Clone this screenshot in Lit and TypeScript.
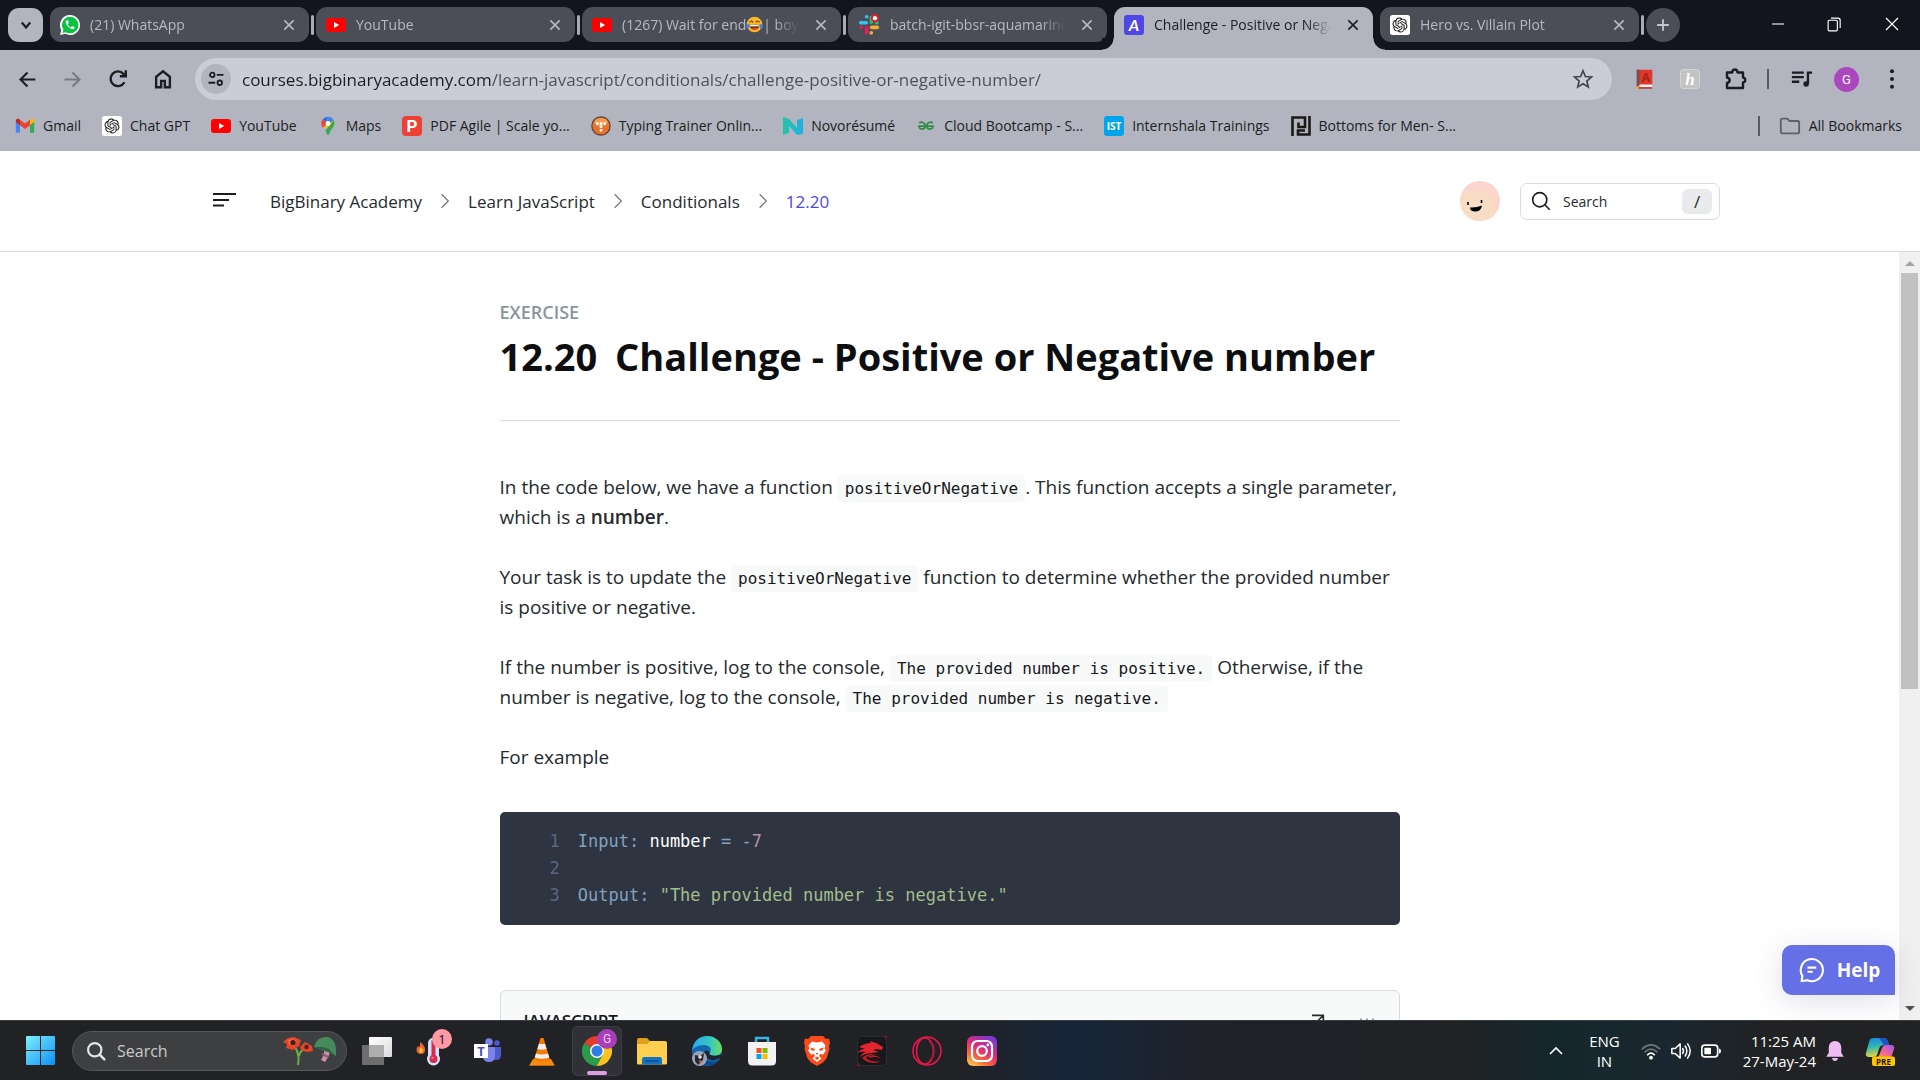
import { LitElement, html, svg, css, nothing, TemplateResult } from "lit";
import { customElement } from "lit/decorators.js";
import { classMap } from "lit/directives/class-map.js";

/* ---------- icons ---------- */

const icon = (size: number, body: TemplateResult, box = "0 0 24 24") =>
  html`<svg width=${size} height=${size} viewBox=${box} fill="none" aria-hidden="true">${body}</svg>`;

const gptPath =
  "M22.2819 9.8211a5.9847 5.9847 0 0 0-.5157-4.9108 6.0462 6.0462 0 0 0-6.5098-2.9A6.0651 6.0651 0 0 0 4.9807 4.1818a5.9847 5.9847 0 0 0-3.9977 2.9 6.0462 6.0462 0 0 0 .7427 7.0966 5.98 5.98 0 0 0 .511 4.9107 6.051 6.051 0 0 0 6.5146 2.9001A5.9847 5.9847 0 0 0 13.2599 24a6.0557 6.0557 0 0 0 5.7718-4.2058 5.9894 5.9894 0 0 0 3.9977-2.9001 6.0557 6.0557 0 0 0-.7475-7.0729zm-9.022 12.6081a4.4755 4.4755 0 0 1-2.8764-1.0408l.1419-.0804 4.7783-2.7582a.7948.7948 0 0 0 .3927-.6813v-6.7369l2.02 1.1686a.071.071 0 0 1 .038.052v5.5826a4.504 4.504 0 0 1-4.4945 4.4944zm-9.6607-4.1254a4.4708 4.4708 0 0 1-.5346-3.0137l.142.0852 4.783 2.7582a.7712.7712 0 0 0 .7806 0l5.8428-3.3685v2.3324a.0804.0804 0 0 1-.0332.0615L9.74 19.9502a4.4992 4.4992 0 0 1-6.1408-1.6464zM2.3408 7.8956a4.485 4.485 0 0 1 2.3655-1.9728V11.6a.7664.7664 0 0 0 .3879.6765l5.8144 3.3543-2.0201 1.1685a.0757.0757 0 0 1-.071 0l-4.8303-2.7865A4.504 4.504 0 0 1 2.3408 7.872zm16.5963 3.8558L13.1038 8.364 15.1192 7.2a.0757.0757 0 0 1 .071 0l4.8303 2.7913a4.4944 4.4944 0 0 1-.6765 8.1042v-5.6772a.79.79 0 0 0-.407-.667zm2.0107-3.0231l-.142-.0852-4.7735-2.7818a.7759.7759 0 0 0-.7854 0L9.409 9.2297V6.8974a.0662.0662 0 0 1 .0284-.0615l4.8303-2.7866a4.4992 4.4992 0 0 1 6.6802 4.66zM8.3065 12.863l-2.02-1.1638a.0804.0804 0 0 1-.038-.0567V6.0742a4.4992 4.4992 0 0 1 7.3757-3.4537l-.142.0805L8.704 5.459a.7948.7948 0 0 0-.3927.6813zm1.0976-2.3654l2.602-1.4998 2.6069 1.4998v2.9994l-2.5974 1.4997-2.6067-1.4997Z";

const phonePath =
  "M6.62 10.79c1.44 2.83 3.76 5.14 6.59 6.59l2.2-2.2c.27-.27.67-.36 1.02-.24 1.12.37 2.33.57 3.57.57.55 0 1 .45 1 1V20c0 .55-.45 1-1 1-9.39 0-17-7.61-17-17 0-.55.45-1 1-1h3.5c.55 0 1 .45 1 1 0 1.25.2 2.45.57 3.57.11.35.03.74-.25 1.02l-2.2 2.2z";

const youtube = icon(20, svg`
  <rect x="0" y="3" width="20" height="14" rx="3" fill="#f00"/>
  <path d="M8 7l5.2 3L8 13z" fill="#fff"/>`, "0 0 20 20");

const chatgpt = icon(20, svg`
  <rect width="32" height="32" rx="4" fill="#fff"/>
  <path transform="translate(4 4)" d=${gptPath} fill="#111"/>`, "0 0 32 32");

const whatsapp = icon(20, svg`
  <path d="M12 0a12 12 0 1 1-5.6 22.6L0 24l1.6-6A12 12 0 0 1 12 0z" fill="#fff"/>
  <path d="M12 2a10 10 0 1 1-5 18.600L3 21.500l1-4A10 10 0 0 1 12 2z" fill="#0dc143"/>
  <path transform="translate(5.200 5) scale(.57)" d=${phonePath} fill="#fff"/>`);

const slack = icon(22, svg`
  <g stroke-width="4" stroke-linecap="round">
    <path d="M3 9.500h6" stroke="#36c5f0"/><path d="M9.500 3v0" stroke="#36c5f0"/>
    <path d="M14.500 4v5" stroke="#2eb67d"/><path d="M20.500 9.500v0" stroke="#2eb67d"/>
    <path d="M15 14.500h6" stroke="#ecb22e"/><path d="M14.500 20.500v0" stroke="#ecb22e"/>
    <path d="M9.500 15v5.500" stroke="#e01e5a"/><path d="M3.500 14.500v0" stroke="#e01e5a"/>
  </g>
  <circle cx="18.500" cy="4.500" r="4.500" fill="#e0202c"/><circle cx="18.500" cy="4.500" r="2.300" fill="#fff"/>`);

const academy = icon(20, svg`
  <rect width="20" height="20" rx="3" fill="#4f46e5"/>
  <text x="10" y="16" text-anchor="middle" font-family="Lato, sans-serif" font-style="italic" font-weight="700" font-size="16" fill="#fff">A</text>`, "0 0 20 20");

const laughing = icon(17, svg`
  <circle cx="12" cy="12" r="11" fill="#fcb829"/>
  <path d="M5 12.500h14a7 7 0 0 1-14 0z" fill="#7a3510"/>
  <path d="M6 12.500h12v2H6z" fill="#fff"/>
  <path d="M8 18.500a6 6 0 0 1 8 0 7 7 0 0 1-8 0z" fill="#e8443c"/>
  <path d="M5 9q2.500-4 5 0M14 9q2.500-4 5 0" stroke="#6b3410" stroke-width="1.600"/>
  <path d="M4.500 11c-4 1-5 4-4 6s4 1 4-2zM19.500 11c4 1 5 4 4 6s-4 1-4-2z" fill="#3f7df0"/>`);

const gmail = icon(20, svg`
  <path d="M1 20V6l5 4v10H2.500Q1 20 1 20z" fill="#4285f4"/>
  <path d="M23 20V6l-5 4v10h3.500Q23 20 23 20z" fill="#34a853"/>
  <path d="M6 4.500l6 4.500 6-4.500V11l-6 4.500L6 11z" fill="#ea4335"/>
  <path d="M1 6c0-2.500 2.700-3.300 4.300-2.100L6 4.500V11L1 7.200z" fill="#c5221f"/>
  <path d="M23 6c0-2.500-2.700-3.300-4.300-2.100L18 4.500V11l5-3.800z" fill="#fbbc04"/>`);

const maps = icon(20, svg`
  <path d="M12 1a8 8 0 0 0-6.300 3.100L10 8z" fill="#1a73e8"/>
  <path d="M5.700 4.100C3 7.500 3.800 11 5.800 14L12 7.500z" fill="#ea4335"/>
  <path d="M12 1a8 8 0 0 1 6.900 4L12 12.500 9 6z" fill="#4285f4"/>
  <path d="M5.800 14L18.900 5c1.500 3 1.200 6-.9 9z" fill="#fbbc04"/>
  <path d="M18.900 5c2 4-.2 8-2.700 11-2 2.500-2.800 7-4.200 7s-1.500-3.500-3-5.500z" fill="#34a853"/>
  <circle cx="12" cy="9" r="2.900" fill="#fff"/>`);

const pdfAgile = icon(20, svg`
  <rect width="20" height="20" rx="4" fill="#ee4035"/>
  <text x="10" y="16" text-anchor="middle" font-family="Roboto, sans-serif" font-weight="700" font-size="17" fill="#fff">P</text>`, "0 0 20 20");

const typing = icon(20, svg`
  <circle cx="12" cy="12" r="11" fill="#e8722a" stroke="#5c4034" stroke-width="1.400"/>
  <ellipse cx="12" cy="7.500" rx="8" ry="5" fill="#f59a4e"/>
  <path d="M6 7.500h3v3H6zM10.500 7.500h3v3h-3zM15 7.500h3v3h-3zM10.500 11.500h3v3h-3zM10.500 15.500h3v3h-3z" fill="#fff"/>`);

const novo = icon(20, svg`
  <defs><linearGradient id="nv" x1="0" x2="1"><stop stop-color="#27c3a5"/><stop offset="1" stop-color="#1fb0e6"/></linearGradient></defs>
  <path d="M0 1l6 2 8 9V4l6-2v16l-6 1-8-9v7l-6 2z" fill="url(#nv)"/>`, "0 0 20 20");

const geeks = icon(20, svg`
  <g stroke="#2f8d46" stroke-width="2">
    <path d="M4 8.500C6 6.500 11 7.500 11 12s-6 5-7.500 1M20 8.500C18 6.500 13 7.500 13 12s6 5 7.500 1"/>
    <path d="M2.500 12.200h19"/>
  </g>`);

const internshala = icon(20, svg`
  <rect width="20" height="20" rx="3" fill="#00a5ec"/>
  <text x="10" y="14" text-anchor="middle" font-family="Open Sans, sans-serif" font-weight="700" font-size="10" fill="#fff">IST</text>`, "0 0 20 20");

const bottoms = icon(20, svg`
  <path d="M1.500 20V1.500H14v9.500H7.500V6.500" stroke="#1b1816" stroke-width="2.600"/>
  <path d="M18.500 0v18.500H7v-4h7" stroke="#1b1816" stroke-width="2.600"/>`, "0 0 20 20");

const stroke = (size: number, d: string, width = 2, cls = "") =>
  html`<svg class=${cls} width=${size} height=${size} viewBox="0 0 24 24" fill="none" stroke="currentColor" stroke-width=${width} aria-hidden="true"><path d=${d} /></svg>`;

const closeIcon = stroke(16, "M5 5l14 14M19 5L5 19", 2.4);

/* ---------- browser window ---------- */

interface Tab { icon: unknown; title: unknown; label: string; active?: boolean; divider?: boolean; }

@customElement("browser-chrome")
export class BrowserChrome extends LitElement {
  static styles = css`
    :host { display: block; background: #b2b5c0; color: #1c1d22; font-family: "Open Sans", sans-serif; font-size: 14px; }
    button { font: inherit; color: inherit; background: none; border: 0; padding: 0; display: grid; place-items: center; }
    a { color: inherit; text-decoration: none; }
    svg { display: block; flex: none; }
    .strip { height: 50px; background: #12141e; display: flex; align-items: stretch; padding-left: 8px; }
    .more { width: 35px; height: 34px; margin: 8px 7px 0 0; border-radius: 11px; background: #b2b5c0; flex: none; }
    .tab { flex: 0 1 266px; min-width: 0; display: flex; position: relative; }
    .body { width: 259px; height: 35px; margin-top: 7px; border-radius: 11px; background: #4c4e57; color: #b6b9c3;
      display: flex; align-items: center; padding: 0 12px 0 10px; box-sizing: border-box; }
    .title { flex: 1; min-width: 0; margin: 0 14px 0 10px; white-space: nowrap; overflow: hidden; display: flex; align-items: center;
      -webkit-mask-image: linear-gradient(90deg, #000 calc(100% - 24px), transparent); mask-image: linear-gradient(90deg, #000 calc(100% - 24px), transparent); }
    .divider::after { content: ""; position: absolute; right: 2px; top: 15px; width: 3px; height: 20px; border-radius: 2px; background: #a9acb7; }
    .active .body { height: 43px; padding-bottom: 8px; border-radius: 11px 11px 0 0; background: #b2b5c0; color: #1c1d22; }
    .active::before, .active::after { content: ""; position: absolute; bottom: 0; width: 12px; height: 12px; }
    .active::before { left: -12px; background: radial-gradient(circle at 0 0, #12141e 11px, #b2b5c0 12px); }
    .active::after { right: -5px; background: radial-gradient(circle at 100% 0, #12141e 11px, #b2b5c0 12px); }
    .plus { width: 34px; height: 34px; margin-top: 8px; border-radius: 50%; background: #4c4e57; color: #c3c6d0; flex: none; }
    .window { margin-left: auto; display: flex; color: #fff; }
    .window button { width: 57px; height: 48px; }

    .bar { height: 58px; display: flex; align-items: center; padding: 0 6px 0 5px; box-sizing: border-box; }
    .nav { width: 45px; height: 40px; flex: none; }
    .dim { color: #777a84; }
    .omni { flex: 1; min-width: 0; height: 42px; margin: 0 10px; border-radius: 21px; background: #cacdd6;
      display: flex; align-items: center; padding: 0 18px 0 6px; gap: 11px; }
    .info { width: 30px; height: 30px; border-radius: 50%; background: #b2b5c0; flex: none; }
    .url { flex: 1; min-width: 0; border: 0; padding: 0; outline: 0; font: inherit; font-size: 17px; height: 28px;
      background: linear-gradient(90deg, #1c1d22 250px, #4c4f58 250px); -webkit-background-clip: text; background-clip: text; color: transparent; }
    .ext { width: 45px; height: 40px; flex: none; }
    .rule { width: 2px; height: 20px; background: #595b64; flex: none; margin: 0 10px; }
    .me { width: 25px; height: 25px; border-radius: 50%; background: #ab47bc; color: #fff; font: 13px Roboto, sans-serif; display: grid; place-items: center; }
    .marks { height: 43px; display: flex; align-items: center; padding: 0 18px 8px 15px; box-sizing: border-box; gap: 21px; }
    .mark { display: flex; align-items: center; gap: 8px; white-space: nowrap; }
    .all { margin-left: auto; display: flex; align-items: center; gap: 9px; }
  `;

  private tabs: Tab[] = [
    { icon: whatsapp, title: "(21) WhatsApp", label: "(21) WhatsApp", divider: true },
    { icon: youtube, title: "YouTube", label: "YouTube", divider: true },
    { icon: youtube, title: html`(1267) Wait for end${laughing}| boys`, label: "Wait for end", divider: true },
    { icon: slack, title: "batch-igit-bbsr-aquamarine", label: "batch-igit-bbsr-aquamarine" },
    { icon: academy, title: "Challenge - Positive or Negative", label: "Challenge", active: true },
    { icon: chatgpt, title: "Hero vs. Villain Plot", label: "Hero vs. Villain Plot", divider: true },
  ];

  private marks: [unknown, string][] = [
    [gmail, "Gmail"], [chatgpt, "Chat GPT"], [youtube, "YouTube"], [maps, "Maps"],
    [pdfAgile, "PDF Agile | Scale yo..."], [typing, "Typing Trainer Onlin..."], [novo, "Novorésumé"],
    [geeks, "Cloud Bootcamp - S..."], [internshala, "Internshala Trainings"], [bottoms, "Bottoms for Men- S..."],
  ];

  render() {
    return html`
      <div class="strip">
        <button class="more" aria-label="Search tabs">${stroke(20, "M7 9l5 6 5-6", 2.6)}</button>
        ${this.tabs.map((t) => html`
          <div class=${classMap({ tab: true, active: !!t.active, divider: !!t.divider })}>
            <div class="body">
              ${t.icon}<span class="title">${t.title}</span>
              <button aria-label="Close ${t.label}">${closeIcon}</button>
            </div>
          </div>`)}
        <button class="plus" aria-label="New tab">${stroke(20, "M12 5v14M5 12h14", 2.2)}</button>
        <div class="window">
          <button aria-label="Minimize">${stroke(16, "M3 12h18", 1.6)}</button>
          <button aria-label="Restore">${stroke(17, "M3 7.500q0-1.500 1.500-1.500h10q1.500 0 1.500 1.500v12q0 1.500-1.500 1.500h-10Q3 21 3 19.500zM7 3h10q3 0 3 3v11", 1.6)}</button>
          <button aria-label="Close">${stroke(18, "M4 4l16 16M20 4L4 20", 1.6)}</button>
        </div>
      </div>

      <div class="bar">
        <button class="nav" aria-label="Back">${stroke(21, "M21 12H4M12 4l-8 8 8 8", 2.4)}</button>
        <button class="nav dim" aria-label="Forward">${stroke(21, "M3 12h17M12 4l8 8-8 8", 2.4)}</button>
        <button class="nav" aria-label="Reload">${stroke(22, "M19 15.500A8 8 0 1 1 18 6.500l1.500 2M20.500 2.500V9h-6.500", 2.6)}</button>
        <button class="nav" aria-label="Home">${stroke(22, "M4.500 21V9.500L12 3.500l7.500 6V21H14v-7h-4v7z", 2.6)}</button>
        <div class="omni">
          <button class="info" aria-label="View site information">
            ${icon(18, svg`<g stroke="#1c1d22" stroke-width="2.400"><circle cx="7" cy="6.500" r="3"/><path d="M13 6.500h9M2 17h9"/><circle cx="17" cy="17" r="3"/></g>`)}
          </button>
          <input class="url" aria-label="Address bar" value="courses.bigbinaryacademy.com/learn-javascript/conditionals/challenge-positive-or-negative-number/" />
          <button class="dim" aria-label="Bookmark this page">${icon(22, svg`<path d="M12 3l2.600 6.300 6.700.500-5.100 4.400 1.600 6.600L12 17.200l-5.800 3.600 1.600-6.600L2.700 9.800l6.700-.500z" stroke="#44464f" stroke-width="1.800"/>`)}</button>
        </div>
        <button class="ext" aria-label="Dictionary">
          ${icon(22, svg`<path d="M3 2h17v17H6l-3 3z" fill="#e2382c"/><path d="M3 2h3v17l-3 2z" fill="#6e5450"/><path d="M6 18h14v3H6z" fill="#f2efee"/><path d="M3 20h5l-2 3-3-1z" fill="#f2b62c"/><path d="M5 21h15v1.500H5z" fill="#b3241b"/>
            <text x="13" y="15" text-anchor="middle" font-family="Liberation Sans, sans-serif" font-weight="700" font-size="13" fill="#9c221a">A</text>`)}
        </button>
        <button class="ext" aria-label="Honey">
          ${icon(20, svg`<rect x=".5" y=".5" width="19" height="19" rx="3" fill="#c3c3c3" stroke="#d4d4d4"/><text x="10" y="16" text-anchor="middle" font-family="Liberation Serif, serif" font-style="italic" font-weight="700" font-size="17" fill="#fff">h</text>`, "0 0 20 20")}
        </button>
        <button class="ext" aria-label="Extensions">
          ${icon(24, svg`<path d="M4 5.500h5.200c.3-4 5-4 5.300 0H20v5c3 .4 3 4.600 0 5V21H4v-5c3.500-.5 3.500-5 0-5.500z" stroke="#1c1d22" stroke-width="2.400" stroke-linejoin="round"/>`)}
        </button>
        <span class="rule"></span>
        <button class="ext" aria-label="Media controls">
          ${icon(22, svg`<path d="M1 5h13M1 10h13M1 15h8M18.500 4v13M17.500 5H23" stroke="#1c1d22" stroke-width="2.600"/><circle cx="16.500" cy="17.500" r="3" fill="#1c1d22"/>`)}
        </button>
        <button class="ext" aria-label="Profile"><span class="me">G</span></button>
        <button class="ext" aria-label="Menu">
          ${icon(22, svg`<g fill="#1c1d22"><circle cx="12" cy="3.500" r="2.200"/><circle cx="12" cy="12" r="2.200"/><circle cx="12" cy="20.500" r="2.200"/></g>`)}
        </button>
      </div>

      <nav class="marks" aria-label="Bookmarks">
        ${this.marks.map(([i, label]) => html`<a class="mark" href="#">${i}${label}</a>`)}
        <span class="all">
          <span class="rule"></span>
          <a class="mark" href="#">${icon(22, svg`<path d="M2 5.500q0-1.500 1.500-1.500H9l2.500 2.500h9Q22 6.500 22 8v10.500q0 1.500-1.500 1.500h-17Q2 20 2 18.500z" stroke="#5d5f69" stroke-width="2"/>`)}All Bookmarks</a>
        </span>
      </nav>`;
  }
}

/* ---------- lesson page ---------- */

@customElement("lesson-page")
export class LessonPage extends LitElement {
  static styles = css`
    :host { display: flex; flex-direction: column; min-height: 0; background: #fff; color: #262a2e; font-family: "Open Sans", sans-serif; position: relative; }
    svg { display: block; flex: none; }
    a { color: inherit; text-decoration: none; }
    button { font: inherit; color: inherit; background: none; border: 0; padding: 0; display: grid; place-items: center; }
    .head { border-bottom: 1px solid #d8dcde; flex: none; }
    .inner { max-width: 1520px; height: 100px; margin: 0 auto; padding-left: 12px; display: flex; align-items: center; box-sizing: border-box; }
    .crumbs { display: flex; align-items: center; gap: 14px; margin-left: 32px; font-size: 17px; font-weight: 500; }
    .crumbs svg { color: #6b7680; }
    .here { color: #4f46e5; }
    .avatar { margin-left: auto; margin-right: 20px; }
    .find { width: 200px; height: 37px; box-sizing: border-box; border: 1px solid #d8dcde; border-radius: 7px;
      display: flex; align-items: center; padding: 0 7px 0 10px; gap: 12px; }
    .find input { flex: 1; min-width: 0; border: 0; outline: 0; padding: 0; background: none; font: inherit; font-size: 14px; }
    .find input::placeholder { color: #262a2e; opacity: 1; }
    .find kbd { width: 30px; height: 25px; border-radius: 6px; background: #e8eaec; font: 17px "Open Sans", sans-serif; display: grid; place-items: center; }

    .scroll { flex: 1; min-height: 0; display: flex; }
    .view { flex: 1; min-width: 0; overflow: hidden; }
    .lesson { max-width: 900px; margin: 0 auto; padding-top: 48px; }
    .kind { margin: 0; color: #8a959e; font-size: 18px; line-height: 24px; font-weight: 600; }
    h1 { margin: 7px 0 0; font-size: 38px; line-height: 50px; font-weight: 700; color: #0d0e10; white-space: nowrap; }
    .no { margin-right: 8px; }
    hr { border: 0; border-top: 1px solid #d8dcde; margin: 39px 0 51px; }
    p.text { margin: 0 0 30px; font-size: 19px; line-height: 30px; }
    b { font-weight: 600; }
    .text code { font: 16px/20px "DejaVu Sans Mono", monospace; background: #f8f9f9; border-radius: 4px; padding: 4px 7px; color: #16181b; }
    .code { margin: 40px 0 65px; background: #2e3440; border-radius: 5px; padding: 16px 50px; font: 17px/27px "DejaVu Sans Mono", monospace; color: #81a1c1; }
    .code ol { list-style: none; margin: 0; padding: 0; }
    .code li { display: flex; gap: 18px; white-space: pre; }
    .code .n { color: #5b6885; }
    .id { color: #fff; } .num { color: #b48ead; } .str { color: #a3be8c; }
    .editor { border: 1px solid #d8dcde; border-radius: 6px; background: #f8f9f9; padding: 18px 23px 0; height: 120px; display: flex; justify-content: space-between; }
    .editor h2 { margin: 0; font-size: 17px; line-height: 24px; font-weight: 600; color: #16181b; }
    .tools { display: flex; gap: 32px; padding-top: 5px; }
    .bar { width: 21px; background: #f0f0f0; display: flex; flex-direction: column; align-items: center; box-sizing: border-box; padding: 6px 0; gap: 5px; }
    .thumb { width: 17px; height: 55%; background: #c1c1c1; }
    .grow { flex: 1; }
    .help { position: absolute; right: 25px; bottom: 25px; width: 113px; height: 50px; border-radius: 10px 10px 0 10px; background: #6570e6; color: #fff;
      font-size: 19px; font-weight: 700; display: flex; align-items: center; justify-content: center; gap: 12px; box-shadow: 0 6px 30px rgba(60, 70, 120, .16); }
  `;

  render() {
    const next = stroke(18, "M7.500 3l9 9-9 9", 1.6);
    return html`
      <header class="head">
        <div class="inner">
          <button aria-label="Toggle navigation">${icon(26, svg`<path d="M1 6h23M1 12h16M1 17.500h11" stroke="#1c1d22" stroke-width="2"/>`, "0 0 26 26")}</button>
          <nav class="crumbs" aria-label="Breadcrumb">
            <a href="#">BigBinary Academy</a>${next}<a href="#">Learn JavaScript</a>${next}<a href="#">Conditionals</a>${next}<a class="here" href="#">12.20</a>
          </nav>
          <button class="avatar" aria-label="Your profile">
            ${icon(40, svg`
              <defs><clipPath id="face"><circle cx="20" cy="20" r="20"/></clipPath></defs>
              <g clip-path="url(#face)"><rect width="40" height="40" fill="#fcd5ce"/><circle cx="15.500" cy="29" r="20" fill="#f8dcc4"/>
              <path d="M8 21v3M21.500 19v3" stroke="#000" stroke-width="1.600"/><path d="M10 26.500q6 .5 12-2-1 6-6.500 6T10 26.500z" fill="#000"/></g>`, "0 0 40 40")}
          </button>
          <label class="find">
            ${icon(20, svg`<circle cx="10.500" cy="10.500" r="8.500" stroke="#1c1d22" stroke-width="2"/><path d="M16.500 16.500l6 6" stroke="#1c1d22" stroke-width="2"/>`)}
            <input type="search" placeholder="Search" aria-label="Search" /><kbd>/</kbd>
          </label>
        </div>
      </header>
      <div class="scroll">
        <main class="view">
          <article class="lesson">
            <p class="kind">EXERCISE</p>
            <h1><span class="no">12.20</span> Challenge - Positive or Negative number</h1>
            <hr />
            <p class="text">In the code below, we have a function <code>positiveOrNegative</code>. This function accepts a single parameter, which is a <b>number</b>.</p>
            <p class="text">Your task is to update the <code>positiveOrNegative</code> function to determine whether the provided number is positive or negative.</p>
            <p class="text">If the number is positive, log to the console, <code>The provided number is positive.</code> Otherwise, if the number is negative, log to the console, <code>The provided number is negative.</code></p>
            <p class="text">For example</p>
            <div class="code"><ol>
              <li><span class="n">1</span><span>Input: <span class="id">number</span> = -<span class="num">7</span></span></li>
              <li><span class="n">2</span></li>
              <li><span class="n">3</span><span>Output: <span class="str">"The provided number is negative."</span></span></li>
            </ol></div>
            <section class="editor">
              <h2>JAVASCRIPT</h2>
              <div class="tools">
                ${stroke(16, "M3 2h17v17M20 2L3 19", 2.4)}
                ${icon(18, svg`<g fill="#9aa3aa"><circle cx="4" cy="7" r="1.500"/><circle cx="12" cy="7" r="1.500"/><circle cx="20" cy="7" r="1.500"/></g>`)}
              </div>
            </section>
          </article>
        </main>
        <div class="bar" aria-hidden="true">
          ${icon(10, svg`<path d="M0 8l5-5 5 5z" fill="#a3a3a3"/>`, "0 0 10 10")}
          <div class="thumb"></div><div class="grow"></div>
          ${icon(10, svg`<path d="M0 2l5 5 5-5z" fill="#505050"/>`, "0 0 10 10")}
        </div>
      </div>
      <button class="help">
        ${icon(28, svg`<path d="M4 21.500l.6-4.500A9.500 9.500 0 1 1 9 20.800z" stroke="#fff" stroke-width="1.800" stroke-linejoin="round"/><path d="M9 10h7.500M9 13.500h4.500" stroke="#fff" stroke-width="1.800"/>`)}Help
      </button>`;
  }
}

/* ---------- taskbar ---------- */

const apps: { name: string; art: TemplateResult; open?: boolean; badge?: string }[] = [
  { name: "Task view", art: svg`
      <defs><linearGradient id="tv" x2="1" y2="1"><stop stop-color="#fff"/><stop offset="1" stop-color="#dcdcdc"/></linearGradient></defs>
      <rect x="7" y="1" width="23" height="20" rx="1" fill="url(#tv)"/><rect x="0" y="9" width="22" height="20" rx="1" fill="#777" fill-opacity=".9"/><path d="M7 9h15v12H7z" fill="#aeaeae"/>` },
  { name: "Weather", badge: "1", art: svg`
      <path d="M3 6q5 3 5 8 0 4-4 4t-4.500-4q0-3 1.500-4l1 1.500Q3.500 9 3 6z" fill="#f0642c"/><path d="M4 11q2.500 2.500 1.500 5-1.500 1.500-3 0-1-2 1.500-5z" fill="#ffc83d"/>
      <rect x="11" y="2" width="11" height="22" rx="5" fill="#cfe3fb"/><circle cx="16.500" cy="23" r="6.500" fill="#cfe3fb"/>
      <path d="M16.500 4v18" stroke="#d72a4e" stroke-width="4"/><circle cx="16.500" cy="23" r="4" fill="#d72a4e"/><circle cx="15.500" cy="22" r="1.400" fill="#f06a86"/>` },
  { name: "Teams", art: svg`
      <circle cx="17" cy="6" r="3.800" fill="#7b83eb"/><circle cx="25" cy="7" r="2.800" fill="#5059c9"/>
      <path d="M20 11h9v8q0 5-5 5-4 0-4-5z" fill="#5059c9"/><path d="M11 11h12v9q0 6-6 6t-6-6z" fill="#7b83eb"/>
      <rect x="2" y="8" width="14" height="14" fill="#fff"/><text x="9" y="20" text-anchor="middle" font-family="Open Sans, sans-serif" font-weight="700" font-size="13" fill="#4b53bc">T</text>` },
  { name: "VLC", art: svg`
      <path d="M6 23h18l3.500 6h-25z" fill="#f78b14"/><path d="M2.500 29h25v1h-25z" fill="#c66503"/>
      <path d="M13.500 2h3L23 24q-8 3.500-16 0z" fill="#f47b00"/><path d="M11.900 8h6.200l1.500 5q-4.600 1.500-9.200 0zM9 17.500q6 2 12 0l1.300 4q-7.300 2.600-14.600 0z" fill="#eceef0"/>` },
  { name: "Chrome", open: true, art: svg`
      <path d="M15 15L2 7.500A15 15 0 0 1 28 7.500z" fill="#e33b2e"/><path d="M15 15L28 7.500A15 15 0 0 1 15 30z" fill="#fcc31e"/><path d="M15 15l0 15A15 15 0 0 1 2 7.500z" fill="#2c9c4b"/>
      <path d="M15 8h13.300l-6.500 11z" fill="#fcc31e"/><path d="M9 18.500L2 7.500 9 11z" fill="#2c9c4b"/><path d="M21 18.500L15 30l-3-7z" fill="#2c9c4b"/>
      <circle cx="15" cy="15" r="7" fill="#fff"/><circle cx="15" cy="15" r="5.500" fill="#2f7be8"/>` },
  { name: "File Explorer", art: svg`
      <path d="M0 4q0-2 2-2h8l3 3-3 5H0z" fill="#e0a019"/><path d="M0 8h10l3-3h15q2 0 2 2v20q0 1.500-1.500 1.500h-27Q0 28.500 0 27z" fill="#ffd04f"/>
      <path d="M5 28.500V23q0-2 2-2h16q2 0 2 2v5.500z" fill="#1474c4"/><path d="M9 25h12" stroke="#0a4c88" stroke-width="1.500" stroke-linecap="round"/>` },
  { name: "Edge", art: svg`
      <defs><linearGradient id="e1" x2="1"><stop stop-color="#2aa9e8"/><stop offset=".6" stop-color="#35c8c0"/><stop offset="1" stop-color="#6fdc5c"/></linearGradient></defs>
      <circle cx="15" cy="15" r="15" fill="#1366b4"/><path d="M0 15C1 5 8 0 15 0c9 0 15 6.500 15 13 0 5-4 7-8 7-3 0-5-1-4.500-2.500C21 13 17 9 12 9 6 9 1 12 0 15z" fill="url(#e1)"/>
      <path d="M11 16c0 8 8 12 16 8-5 7-13 7-18 3-4-4-3-9 2-11z" fill="#0b4a90"/><path d="M12.500 15q-1 7 7 9 5 1 10-3v-3q-5 3-11 1-2-1-1-2.500-2-3-5-1.500z" fill="#202327"/>
      <circle cx="7.500" cy="22.500" r="7.500" fill="#9aa4b4"/><path d="M3 19l5 1 4-3-1 7-5 5-3-4z" fill="#23262e"/><circle cx="8" cy="21" r="1.800" fill="#e6ddd4"/><path d="M7 24l4 1-3 3z" fill="#c8644a"/>` },
  { name: "Microsoft Store", art: svg`
      <path d="M9 8V2h12v6" stroke="#35b5ea" stroke-width="2.400"/><path d="M1 6h28v19q0 4.500-4.500 4.500h-19Q1 29.500 1 25z" fill="#f2f2f3"/>
      <path d="M9.500 12h5v5h-5z" fill="#f25022"/><path d="M15.500 12h5v5h-5z" fill="#7fba00"/><path d="M9.500 18h5v5h-5z" fill="#00a4ef"/><path d="M15.500 18h5v5h-5z" fill="#ffb900"/>` },
  { name: "Brave", art: svg`
      <path d="M9 0h12l3 3 3-.5 1 4.500-1 3 .5 3-3 9.500-3.500 4L15 30l-6-3.500-3.500-4L2.500 13 3 10 2 7l1-4.500L6 3z" fill="#fb4a1c"/>
      <path d="M10 5.500l5 1 5-1 3.500 4-1 3 1.500 2-3 4-3-.5-1 2 2.500 2.500-4.500 3.500-4.500-3.500L13 20l-1-2-3 .5-3-4 1.500-2-1-3z" fill="#fff"/>
      <path d="M8.500 11.500l4.500 1.500-1 2-3-1zM21.500 11.500L17 13l1 2 3-1zM13.500 17h3L15 19zM12.500 22l2.500-1.500 2.500 1.500-2.500 2z" fill="#fb4a1c"/>` },
  { name: "Dragon Center", art: svg`
      <path d="M24 0h6v10zM0 22l6 8H0z" fill="#8d1420"/><rect x=".5" y=".5" width="29" height="29" rx="4" fill="#17181a" fill-opacity=".92" stroke="#2c2d30"/>
      <path d="M2 11q6-4 12-4l-1-2 6 2 7 4-1 3-5-1-4 1 6 2-7 1q-7 0-12 4 2-4 6-5-5-1-9 1 4-4 8-4-3-1-6-2z" fill="#e3252c"/>
      <path d="M5 22q7-6 13-3-6-1-9 3 6 5 16 3-12 5-20-3zM11 20q8-2 13 2-7-2-11 0z" fill="#c11c24"/>` },
  { name: "Opera GX", art: svg`
      <circle cx="15" cy="15" r="14" stroke="#e8174b" stroke-width="1.600"/><ellipse cx="13" cy="15" rx="8.500" ry="13" stroke="#e8174b" stroke-width="1.600"/>
      <path d="M17 5q5 3 5 10t-5 10" stroke="#b5143c" stroke-width="1.600"/>` },
  { name: "Instagram", art: svg`
      <defs><linearGradient id="ig" x1=".1" y1="1" x2=".7" y2="0"><stop stop-color="#fdd14e"/><stop offset=".3" stop-color="#f5683c"/><stop offset=".6" stop-color="#dd2a7b"/><stop offset="1" stop-color="#7a3ad0"/></linearGradient></defs>
      <rect width="30" height="30" rx="6" fill="url(#ig)"/><rect x="5" y="5" width="20" height="20" rx="5.500" stroke="#fff" stroke-width="2.200"/><circle cx="15" cy="15" r="4.800" stroke="#fff" stroke-width="2.200"/><circle cx="20.800" cy="9" r="1.400" fill="#fff"/>` },
];

@customElement("task-bar")
export class TaskBar extends LitElement {
  static styles = css`
    :host { display: flex; align-items: center; height: 60px; box-sizing: border-box; padding: 0 25px 0 26px; border-top: 1px solid #3a3d3f; color: #fff;
      font-family: "Open Sans", sans-serif; font-size: 15px; position: relative;
      background: linear-gradient(90deg, #202224 0%, #212226 50%, #16263a 56%, #202129 63%, #202224 76%, #14272c 81%, #1b2730 87%, #202224 92%); }
    svg { display: block; flex: none; overflow: visible; }
    button { font: inherit; color: inherit; background: none; border: 0; padding: 0; display: grid; place-items: center; }
    .search { width: 275px; height: 40px; margin-left: 17px; box-sizing: border-box; border: 1px solid #545657; border-radius: 20px; background: #3d3f40;
      display: flex; align-items: center; gap: 11px; padding: 0 9px 0 13px; }
    .search input { flex: 1; min-width: 0; border: 0; outline: 0; padding: 0; background: none; font: inherit; font-size: 16px; color: #fff; }
    .search input::placeholder { color: #c9cacb; opacity: 1; }
    .apps { display: flex; gap: 5px; margin-left: 5px; }
    .app { width: 50px; height: 50px; border-radius: 6px; position: relative; }
    .open { background: #2f3136; box-shadow: inset 0 0 0 1px #3b3d42; }
    .open::after { content: ""; position: absolute; left: 15px; bottom: 1px; width: 20px; height: 4px; border-radius: 2px; background: #dc9fe4; }
    .badge { position: absolute; right: 5px; top: 3px; width: 20px; height: 20px; border-radius: 50%; background: #ff99a4; color: #111; font-size: 13px; display: grid; place-items: center; }
    .g { background: #a63fb8; color: #f0c9f5; font: 12px Roboto, sans-serif; }
    .tray { margin-left: auto; display: flex; align-items: center; }
    .lang { text-align: center; line-height: 20px; margin: 0 21px 0 24px; }
    .status { display: flex; gap: 10px; }
    .clock { text-align: right; line-height: 20px; margin-left: 22px; }
    .bell { margin: 0 20px 0 9px; }
  `;

  render() {
    return html`
      <button aria-label="Start">${icon(29, svg`
        <defs><linearGradient id="w" x2="1" y2="1"><stop stop-color="#7ff0fc"/><stop offset="1" stop-color="#0a90f5"/></linearGradient></defs>
        <path d="M1 0h13v14H0V1q0-1 1-1zM15 0h13q1 0 1 1v13H15zM0 15h14v14H1q-1 0-1-1zM15 15h14v13q0 1-1 1H15z" fill="url(#w)"/>`, "0 0 29 29")}</button>
      <label class="search">
        ${icon(20, svg`<circle cx="10.500" cy="10.500" r="8" stroke="#e3e4e6" stroke-width="2.600"/><path d="M16.500 16.500l5.500 5.500" stroke="#e3e4e6" stroke-width="3" stroke-linecap="round"/>`)}
        <input type="search" placeholder="Search" aria-label="Taskbar search" />
        <svg width="54" height="30" viewBox="0 0 54 30" aria-hidden="true">
          <path d="M12 11q5 8 3 18M23 13q-6 1-7 7" stroke="#6fae45" stroke-width="2" fill="none" />
          <path d="M0 6l5-4 6-1 7 3-2 6-6 4-7-2 1-4z" fill="#e8442a" /><path d="M5 4l5-1 4 2-3 3-5 1z" fill="#f26a3d" /><circle cx="10" cy="6.500" r="2.600" fill="#3d2320" />
          <path d="M17 11l5-5 7 4 1 5-6 1-6-2z" fill="#e8442a" /><circle cx="23.500" cy="11" r="2.200" fill="#4a2420" />
          <path d="M38 24q4-7 3-9l6 1q-1 5-5 10z" fill="#d08fa8" /><path d="M39 18l6 3" stroke="#8a5a80" stroke-width="2" />
          <path d="M31 11Q34 0 44 1t9 19Q46 16 31 11z" fill="#46895a" /><path d="M31 11q12 3 22 9l-7-7-6-2z" fill="#2f6341" />
        </svg>
      </label>
      <div class="apps">
        ${apps.map((a) => html`<button class=${classMap({ app: true, open: !!a.open })} aria-label=${a.name}>
          ${icon(30, a.art, "0 0 30 30")}
          ${a.badge ? html`<span class="badge">${a.badge}</span>` : nothing}
          ${a.open ? html`<span class="badge g">G</span>` : nothing}
        </button>`)}
      </div>
      <div class="tray">
        <button aria-label="Show hidden icons">${stroke(18, "M4 16l8-8 8 8", 2.2)}</button>
        <div class="lang">ENG<br />IN</div>
        <div class="status">
          ${icon(20, svg`<g stroke-width="2" stroke-linecap="round"><path d="M1.500 9.500q10.500-9.500 21 0M5 13q7-6.500 14 0" stroke="#6b7377"/><path d="M8 16.500q4-4 8 0" stroke="#fff"/></g><circle cx="12" cy="20" r="2.300" fill="#fff"/>`)}
          ${icon(20, svg`<g stroke="#fff" stroke-width="1.800" stroke-linejoin="round"><path d="M1 9h4l6-5.500v17L5 15H1z"/><path d="M14 9q2 3 0 6M17 6q4 6 0 12M20 3.500q6 8.500 0 17" stroke-linecap="round"/></g>`)}
          ${icon(20, svg`<rect x="1" y="5" width="19" height="14" rx="3.500" stroke="#fff" stroke-width="2"/><rect x="4" y="8" width="8" height="8" rx="1" fill="#fff"/><path d="M21.500 9q2.500 0 2.500 3t-2.500 3z" fill="#fff"/>`)}
        </div>
        <div class="clock">11:25 AM<br />27-May-24</div>
        <button class="bell" aria-label="Notifications">${icon(20, svg`<path d="M12 0q7 0 7.500 8v6l3 5h-21l3-5V8Q5 0 12 0zM8.500 20.500h7Q15 24 12 24t-3.500-3.500z" fill="#efbdf3"/>`)}</button>
        <button aria-label="Copilot">${icon(30, svg`
          <defs><linearGradient id="c1" x2=".2" y2="1"><stop stop-color="#1b7fe8"/><stop offset=".5" stop-color="#2fb7b0"/><stop offset="1" stop-color="#e8d23c"/></linearGradient>
          <linearGradient id="c2" x1="1" x2=".2" y2="1"><stop stop-color="#9a5cf0"/><stop offset=".6" stop-color="#f0609c"/><stop offset="1" stop-color="#f99352"/></linearGradient></defs>
          <path d="M8 2h11q3 0 4 4l1 3h-5q-4 0-5 4l-2 6q-1 2-4 2H4q-4 0-3-4L4 6q1-4 4-4z" fill="url(#c1)"/><path d="M14 2h5q3 0 4 4l1 3h-5z" fill="#1f52c8"/>
          <path d="M21 9h5q4 0 3 4l-3 9H13l4-10q1-3 4-3z" fill="url(#c2)"/>
          <rect x="7" y="20.500" width="23" height="9.500" rx="2" fill="#fcc600"/><text x="18.500" y="28.500" text-anchor="middle" font-family="Open Sans, sans-serif" font-weight="700" font-size="8" fill="#1c1600">PRE</text>`, "0 0 30 30")}</button>
      </div>`;
  }
}

@customElement("app-root")
export class AppRoot extends LitElement {
  static styles = css`
    :host { display: grid; grid-template-rows: auto minmax(0, 1fr) auto; grid-template-columns: minmax(0, 1fr); height: 100vh; overflow: hidden; }
  `;
  render() {
    return html`<browser-chrome></browser-chrome><lesson-page></lesson-page><task-bar></task-bar>`;
  }
}
